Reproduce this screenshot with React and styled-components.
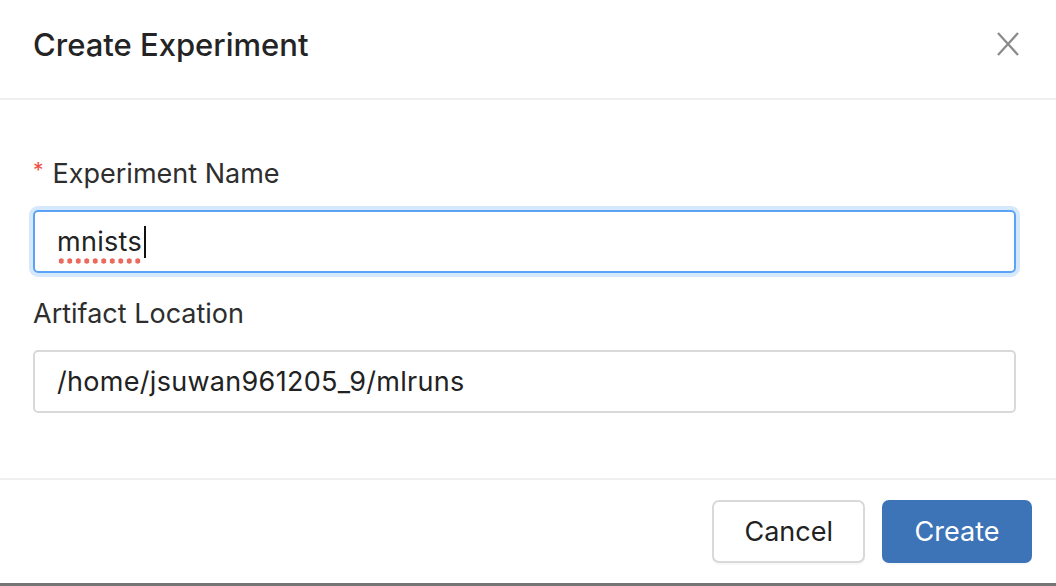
import React from "react";
import styled, { createGlobalStyle } from "styled-components";

const GlobalStyle = createGlobalStyle`
  html, body {
    margin: 0;
    padding: 0;
    background: #ffffff;
  }
  body {
    font-family: Inter, "Liberation Sans", Arial, sans-serif;
    -webkit-font-smoothing: antialiased;
  }
`;

const Modal = styled.div`
  width: 1056px;
  height: 586px;
  box-sizing: border-box;
  display: flex;
  flex-direction: column;
  background: #fff;
  border-bottom: 3px solid #747474;
`;

const Header = styled.div`
  height: 100px;
  box-sizing: border-box;
  display: flex;
  align-items: center;
  justify-content: space-between;
  padding: 0 36px 10px 33px;
  border-bottom: 2px solid #efefef;
`;

const Title = styled.h2`
  margin: 0;
  font-size: 31px;
  font-weight: 500;
  color: #242424;
`;

const CloseButton = styled.button`
  border: 0;
  background: none;
  padding: 0;
  width: 24px;
  height: 26px;
  display: flex;
  align-items: center;
  justify-content: center;
  cursor: pointer;
`;

const Body = styled.div`
  flex: 1;
  display: flex;
  flex-direction: column;
  padding: 53px 40px 0 33px;
  border-bottom: 2px solid #efefef;
`;

const Field = styled.div`
  display: flex;
  flex-direction: column;
  gap: 17px;
  & + & {
    margin-top: 20px;
  }
`;

const Label = styled.label`
  display: flex;
  align-items: center;
  height: 40px;
  font-size: 27px;
  color: #2e2e2e;
`;

const Required = styled.span`
  color: #ee4d3f;
  font-size: 21px;
  margin-right: 9px;
  align-self: flex-start;
  margin-top: 5px;
`;

const InputBox = styled.div`
  height: 63px;
  box-sizing: border-box;
  display: flex;
  align-items: center;
  padding: 0 22px;
  border-radius: 5px;
  border: 2px solid ${(p) => (p.focused ? "#5ba4f5" : "#d9d9d9")};
  box-shadow: ${(p) => (p.focused ? "0 0 0 4px #d6e8fc" : "none")};
  font-size: 27px;
  letter-spacing: 0.3px;
  color: #222;
`;

const Misspelled = styled.span`
  position: relative;
  &::after {
    content: "";
    position: absolute;
    left: 0;
    right: -1px;
    bottom: -6px;
    height: 6px;
    background-image: radial-gradient(circle, #ea6b5e 2.4px, transparent 2.9px);
    background-size: 8.5px 6px;
    background-repeat: repeat-x;
  }
`;

const Caret = styled.span`
  display: inline-block;
  width: 2px;
  height: 32px;
  background: #111;
  margin-left: 2px;
`;

const Footer = styled.div`
  display: flex;
  justify-content: flex-end;
  align-items: flex-start;
  gap: 17px;
  padding: 20px 24px 0 0;
  height: 103px;
  box-sizing: border-box;
`;

const Button = styled.button`
  height: 63px;
  padding: 0 30px;
  box-sizing: border-box;
  border-radius: 7px;
  font-family: Inter, "Liberation Sans", Arial, sans-serif;
  font-size: 27px;
  cursor: pointer;
  border: 2px solid ${(p) => (p.primary ? "#3d74b7" : "#d9d9d9")};
  background: ${(p) => (p.primary ? "#3d74b7" : "#fff")};
  color: ${(p) => (p.primary ? "#fff" : "#222")};
  min-width: ${(p) => (p.primary ? "150px" : "152px")};
  box-shadow: 0 2px 1px rgba(0, 0, 0, 0.03);
`;

function CloseIcon() {
  return (
    <svg width="24" height="26" viewBox="0 0 24 26">
      <path
        d="M2 2 L22 24 M22 2 L2 24"
        stroke="#8a8a8a"
        strokeWidth="2.2"
        fill="none"
      />
    </svg>
  );
}

export default function App() {
  return (
    <>
      <GlobalStyle />
      <Modal>
        <Header>
          <Title>Create Experiment</Title>
          <CloseButton aria-label="Close">
            <CloseIcon />
          </CloseButton>
        </Header>
        <Body>
          <Field>
            <Label>
              <Required>*</Required>
              Experiment Name
            </Label>
            <InputBox focused>
              <Misspelled>mnists</Misspelled>
              <Caret />
            </InputBox>
          </Field>
          <Field>
            <Label>Artifact Location</Label>
            <InputBox>/home/jsuwan961205_9/mlruns</InputBox>
          </Field>
        </Body>
        <Footer>
          <Button>Cancel</Button>
          <Button primary>Create</Button>
        </Footer>
      </Modal>
    </>
  );
}
